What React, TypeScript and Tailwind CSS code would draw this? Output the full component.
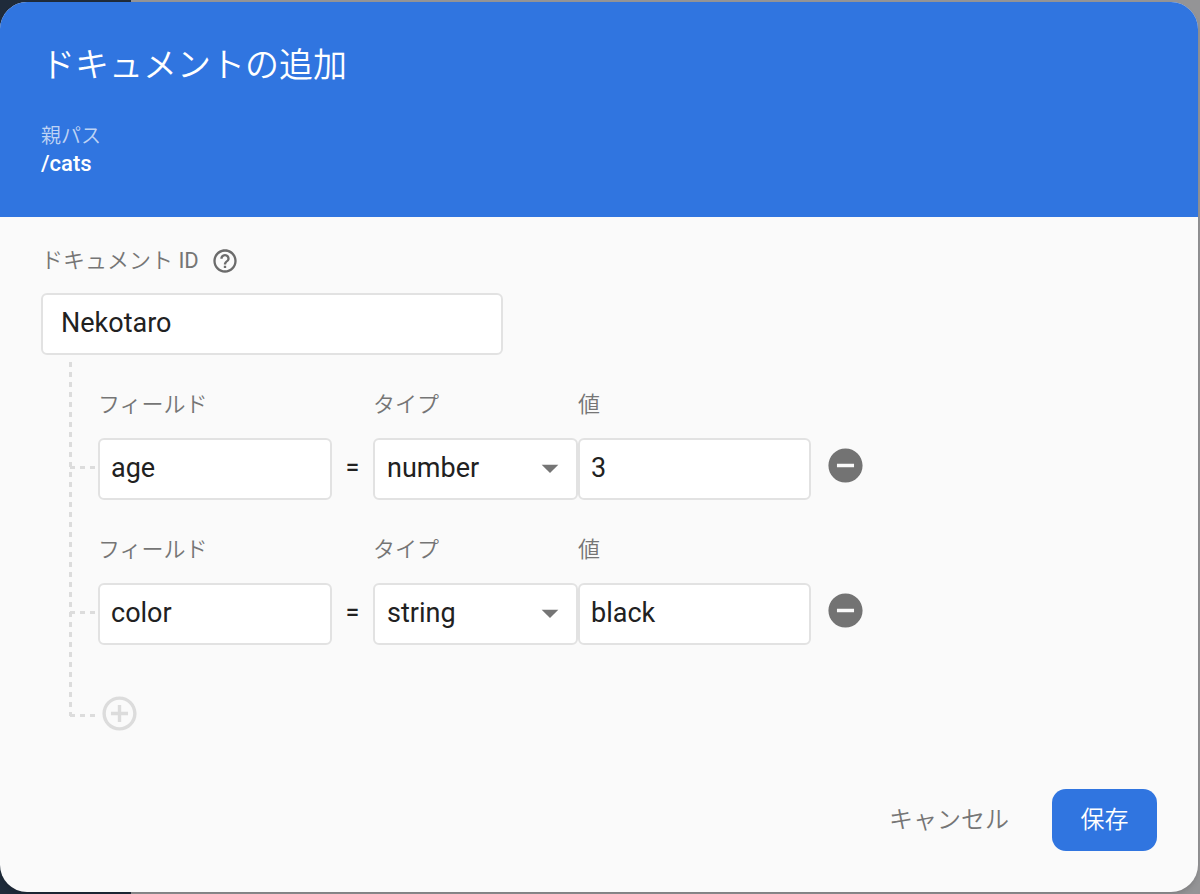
import React, { useState } from 'react'
import { MdAddCircleOutline, MdArrowDropDown, MdHelpOutline, MdRemoveCircle } from 'react-icons/md'

type Field = { id: number; name: string; type: string; value: string }

const fieldTypes = ['string', 'number', 'boolean', 'map', 'array', 'null', 'timestamp', 'geopoint', 'reference']

const initialFields: Field[] = [
  { id: 1, name: 'age', type: 'number', value: '3' },
  { id: 2, name: 'color', type: 'string', value: 'black' },
]

const inputClass =
  'block h-[62px] w-full rounded-md border-2 border-[#e2e2e2] bg-white pb-0.5 text-[27px] text-[#212121] outline-none focus:border-[#3075e0]'
const labelClass = 'block h-[33px] text-[22px] leading-[33px] font-[350] text-[#757575]'

// horizontal dashes from the trunk to a row
function Branch() {
  return (
    <div className="h-[3px] w-7 shrink-0 bg-[repeating-linear-gradient(to_right,#dcdcdc_0px,#dcdcdc_5px,transparent_5px,transparent_10px)]" />
  )
}

type RowProps = {
  field: Field
  onChange: (patch: Partial<Field>) => void
  onRemove: () => void
}

function FieldRow({ field, onChange, onRemove }: RowProps) {
  const { id, name, type, value } = field
  return (
    <div className="mt-[33px] flex items-end">
      <div className="flex h-[66px] items-center">
        <Branch />
      </div>
      <div className="w-[234px]">
        <label htmlFor={`name-${id}`} className={labelClass}>フィールド</label>
        <input
          id={`name-${id}`}
          className={`${inputClass} mt-[17px] px-[11px]`}
          value={name}
          onChange={e => onChange({ name: e.target.value })}
        />
      </div>
      <span className="flex h-[66px] w-[41px] items-center justify-center text-2xl font-medium text-[#212121]">=</span>
      <div className="w-[205px]">
        <label htmlFor={`type-${id}`} className={labelClass}>タイプ</label>
        <div className="relative mt-[17px]">
          <select
            id={`type-${id}`}
            className={`${inputClass} appearance-none px-3`}
            value={type}
            onChange={e => onChange({ type: e.target.value })}
          >
            {fieldTypes.map(t => (
              <option key={t} value={t}>{t}</option>
            ))}
          </select>
          <MdArrowDropDown size={40} className="pointer-events-none absolute top-2.5 right-2 text-[#757575]" />
        </div>
      </div>
      <div className="w-[233px]">
        <label htmlFor={`value-${id}`} className={labelClass}>値</label>
        <input
          id={`value-${id}`}
          className={`${inputClass} mt-[17px] px-[11px]`}
          value={value}
          onChange={e => onChange({ value: e.target.value })}
        />
      </div>
      <button
        type="button"
        aria-label="フィールドを削除"
        className="ml-[14px] flex h-[70px] items-center text-[#737373]"
        onClick={onRemove}
      >
        <MdRemoveCircle size={41} />
      </button>
    </div>
  )
}

export default function App() {
  const [docId, setDocId] = useState('Nekotaro')
  const [fields, setFields] = useState(initialFields)

  const update = (id: number, patch: Partial<Field>) =>
    setFields(fields.map(f => (f.id === id ? { ...f, ...patch } : f)))
  const add = () => setFields([...fields, { id: Date.now(), name: '', type: 'string', value: '' }])

  return (
    <div className="flex min-h-screen bg-[linear-gradient(to_right,#1f2b3a_131px,#949496_131px)] pt-0.5 pr-0.5 pb-0.5 font-[Roboto,'Noto_Sans_CJK_JP',sans-serif]">
      <form
        role="dialog"
        aria-labelledby="dialog-title"
        className="flex flex-1 flex-col overflow-hidden rounded-[27px] bg-[#fafafa] shadow-md"
        onSubmit={e => e.preventDefault()}
      >
        <header className="bg-[#3075e0] px-[41px] pt-[38px] pb-[39px] text-white">
          <h1 id="dialog-title" className="text-[34px] leading-[50px] font-[350]">ドキュメントの追加</h1>
          <p className="mt-8 text-xl leading-7 font-[350] text-white/70">親パス</p>
          <p className="text-[22px] leading-7 font-medium">/cats</p>
        </header>

        <main className="flex-1 px-[41px] pt-[27px]">
          <div className="flex items-center gap-3">
            <label htmlFor="doc-id" className={labelClass}>
              ドキュメント <span className="font-normal">ID</span>
            </label>
            <MdHelpOutline size={28} className="text-[#6b6b6b]" />
          </div>
          <input
            id="doc-id"
            className={`${inputClass} mt-4 max-w-[462px] px-[18px]`}
            value={docId}
            onChange={e => setDocId(e.target.value)}
          />

          <div className="ml-7 flex">
            <div className="mt-[7px] mb-[18px] w-[3px] shrink-0 bg-[repeating-linear-gradient(to_bottom,#dcdcdc_0px,#dcdcdc_5px,transparent_5px,transparent_10px)]" />
            <div className="-ml-0.5">
              {fields.map(f => (
                <FieldRow
                  key={f.id}
                  field={f}
                  onChange={patch => update(f.id, patch)}
                  onRemove={() => setFields(fields.filter(x => x.id !== f.id))}
                />
              ))}
              <div className="mt-12 flex items-center">
                <div className="pt-1">
                  <Branch />
                </div>
                <button type="button" aria-label="フィールドを追加" className="ml-[1px] text-[#dcdcdc]" onClick={add}>
                  <MdAddCircleOutline size={41} />
                </button>
              </div>
            </div>
          </div>
        </main>

        <footer className="flex items-center justify-end gap-[43px] px-[41px] pb-[41px] text-2xl font-[350]">
          <button type="button" className="text-[#757575]">キャンセル</button>
          <button type="submit" className="h-[62px] w-[105px] rounded-[14px] bg-[#3075e0] text-white">保存</button>
        </footer>
      </form>
    </div>
  )
}
